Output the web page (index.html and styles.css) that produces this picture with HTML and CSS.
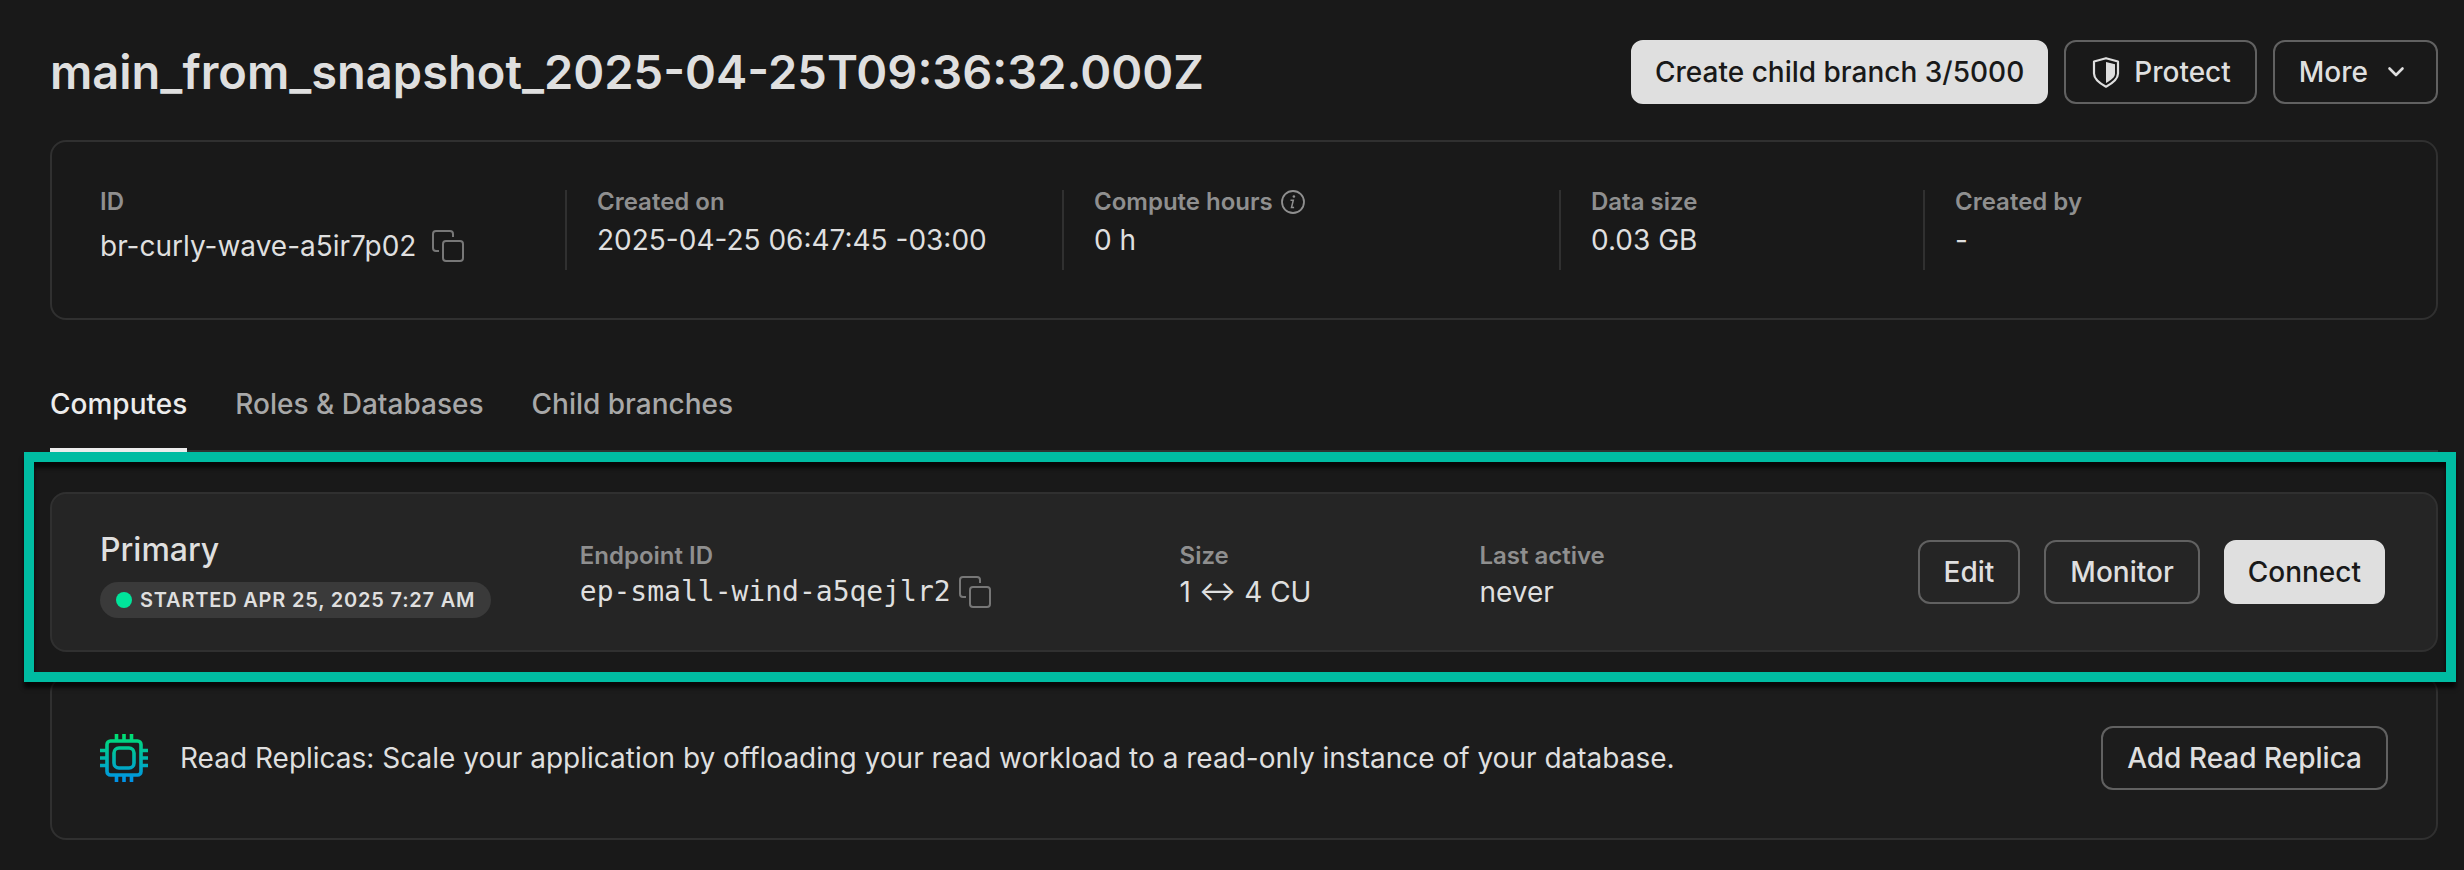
FILE: index.html
```html
<!DOCTYPE html>
<html lang="en">
<head>
<meta charset="utf-8">
<title>main_from_snapshot_2025-04-25T09:36:32.000Z</title>
<link rel="stylesheet" href="styles.css">
</head>
<body>
<main class="page">
  <header class="page-header">
    <h1 class="title">main_from_snapshot_2025-04-25T09:36:32.000Z</h1>
    <div class="actions">
      <button class="btn btn-primary" type="button">Create child branch 3/5000</button>
      <button class="btn" type="button">
        <svg class="icon" viewBox="0 0 32 32" aria-hidden="true"><path d="M16 2.200 28 5.500v12c0 6-5.500 9.700-12 13.200C9.500 27.200 4 23.500 4 17.500v-12z" fill="none" stroke="currentColor" stroke-width="2.200" stroke-linejoin="round"/><path d="M16 6 25 8.200v9.300c0 3.800-4 6.500-9 9.500z" fill="currentColor"/></svg>
        Protect
      </button>
      <button class="btn" type="button">
        More
        <svg class="icon" viewBox="0 0 32 32" aria-hidden="true"><path d="m9.500 12.500 6.500 6.500 6.500-6.500" fill="none" stroke="currentColor" stroke-width="2.600" stroke-linecap="round" stroke-linejoin="round"/></svg>
      </button>
    </div>
  </header>

  <dl class="card summary">
    <div class="fact">
      <dt class="label">ID</dt>
      <dd class="value value-copy">br-curly-wave-a5ir7p02
        <button class="copy" type="button" aria-label="Copy branch ID"><svg class="icon" viewBox="0 0 32 32" aria-hidden="true"><g fill="none" stroke="currentColor" stroke-width="2"><path d="M7 21H4a3 3 0 0 1-3-3V4a3 3 0 0 1 3-3h14a3 3 0 0 1 3 3v3"/><rect x="11" y="11" width="20" height="20" rx="3"/></g></svg></button>
      </dd>
    </div>
    <div class="fact">
      <dt class="label">Created on</dt>
      <dd class="value">2025-04-25 06:47:45 -03:00</dd>
    </div>
    <div class="fact">
      <dt class="label label-info">Compute hours
        <svg class="icon-info" viewBox="0 0 24 24" aria-hidden="true"><circle cx="12" cy="12" r="11" fill="none" stroke="currentColor" stroke-width="1.800"/><path d="M9.500 10.300h2.800l-1.800 7.200h2.600" fill="none" stroke="currentColor" stroke-width="1.500"/><circle cx="12.900" cy="6.500" r="1.300" fill="currentColor"/></svg>
      </dt>
      <dd class="value">0 h</dd>
    </div>
    <div class="fact">
      <dt class="label">Data size</dt>
      <dd class="value">0.03 GB</dd>
    </div>
    <div class="fact">
      <dt class="label">Created by</dt>
      <dd class="value">-</dd>
    </div>
  </dl>

  <nav class="tabs">
    <a class="tab tab-active" href="#computes">Computes</a>
    <a class="tab" href="#roles">Roles &amp; Databases</a>
    <a class="tab" href="#children">Child branches</a>
  </nav>

  <div class="highlight">
    <section class="card compute" id="computes">
      <div class="compute-name">
        <h2 class="name">Primary</h2>
        <span class="chip"><span class="dot"></span>STARTED APR 25, 2025 7:27 AM</span>
      </div>
      <div class="detail">
        <span class="label">Endpoint ID</span>
        <span class="value value-mono">ep-small-wind-a5qejlr2
          <button class="copy" type="button" aria-label="Copy endpoint ID"><svg class="icon" viewBox="0 0 32 32" aria-hidden="true"><g fill="none" stroke="currentColor" stroke-width="2"><path d="M7 21H4a3 3 0 0 1-3-3V4a3 3 0 0 1 3-3h14a3 3 0 0 1 3 3v3"/><rect x="11" y="11" width="20" height="20" rx="3"/></g></svg></button>
        </span>
      </div>
      <div class="detail">
        <span class="label">Size</span>
        <span class="value">1 ↔ 4 CU</span>
      </div>
      <div class="detail">
        <span class="label">Last active</span>
        <span class="value">never</span>
      </div>
      <div class="compute-actions">
        <button class="btn" type="button">Edit</button>
        <button class="btn" type="button">Monitor</button>
        <button class="btn btn-primary" type="button">Connect</button>
      </div>
    </section>
  </div>

  <section class="card replicas">
    <svg class="icon-chip" viewBox="0 0 48 48" aria-hidden="true">
      <defs><linearGradient id="chip-fill" gradientUnits="userSpaceOnUse" x1="0" y1="0" x2="0" y2="48"><stop offset="0" stop-color="#00e070"/><stop offset="1" stop-color="#0090e8"/></linearGradient></defs>
      <g fill="none" stroke="url(#chip-fill)" stroke-width="3.600"><rect x="7" y="7" width="34" height="34" rx="3.500"/><rect x="14" y="14" width="20" height="20" rx="5"/><path d="M16.500 0v6M24 0v6M31.500 0v6M16.500 42v6M24 42v6M31.500 42v6M0 16.500h6M0 24h6M0 31.500h6M42 16.500h6M42 24h6M42 31.500h6"/></g>
    </svg>
    <p class="replicas-text">Read Replicas: Scale your application by offloading your read workload to a read-only instance of your database.</p>
    <button class="btn" type="button">Add Read Replica</button>
  </section>
</main>
</body>
</html>
```
FILE: styles.css
```css
* {
  box-sizing: border-box;
}

body {
  margin: 0;
  background: #191919;
  color: #dfdfdf;
  font-family: Inter, "Liberation Sans", sans-serif;
  font-size: 28px;
  line-height: 36px;
}

.page {
  padding: 40px 26px 30px 50px;
}

.page-header {
  display: flex;
  align-items: center;
  justify-content: space-between;
}

.title {
  margin: 0;
  font-size: 47px;
  line-height: 64px;
  font-weight: 600;
}

.actions {
  display: flex;
  gap: 16px;
}

.btn {
  display: inline-flex;
  align-items: center;
  gap: 12px;
  height: 64px;
  padding: 0 24px;
  border: 2px solid #616161;
  border-radius: 12px;
  background: transparent;
  color: #dfdfdf;
  font: 500 28px/36px Inter, "Liberation Sans", sans-serif;
  white-space: nowrap;
}

.btn-primary {
  border-color: #dfdfdf;
  background: #dfdfdf;
  color: #191919;
  padding: 0 22px;
}

.icon {
  width: 32px;
  height: 32px;
}

.card {
  border: 2px solid #303030;
  border-radius: 16px;
}

.summary {
  display: grid;
  grid-template-columns: 465fr 497fr 497fr 364fr 465fr;
  margin: 36px 0 0;
  padding: 48px;
}

.fact {
  height: 80px;
}

.fact + .fact {
  padding-left: 30px;
  border-left: 2px solid #303030;
}

.label {
  display: block;
  color: #8f8f8f;
  font-size: 24px;
  line-height: 24px;
  font-weight: 600;
}

.label-info {
  display: flex;
  align-items: center;
  gap: 8px;
}

.icon-info {
  width: 24px;
  height: 24px;
}

.value {
  display: block;
  margin: 8px 0 0;
}

.value-copy {
  display: flex;
  align-items: center;
  gap: 16px;
  margin-top: 14px;
}

.copy {
  display: inline-flex;
  padding: 0;
  border: 0;
  background: none;
  color: #777;
}

.tabs {
  display: flex;
  gap: 48px;
  margin-top: 48px;
  border-bottom: 2px solid #303030;
}

.tab {
  margin-bottom: -2px;
  padding: 18px 0 26px;
  border-bottom: 4px solid transparent;
  color: #a8a8a8;
  font-weight: 500;
  text-decoration: none;
}

.tab-active {
  border-color: #ececec;
  color: #ececec;
}

.highlight {
  position: relative;
  margin: 0 -18px 0 -26px;
  padding: 30px 8px 20px 16px;
  border: 10px solid #00bca2;
  box-shadow: 0 6px 4px rgba(0, 0, 0, 0.7), inset 0 6px 4px rgba(0, 0, 0, 0.7);
}

.compute {
  display: grid;
  grid-template-columns: 480fr 600fr 300fr 300fr 606fr;
  align-items: center;
  padding: 32px 51px 32px 48px;
  background: #252525;
}

.name {
  margin: 0 0 8px;
  font-size: 32px;
  line-height: 48px;
  font-weight: 500;
}

.chip {
  display: flex;
  align-items: center;
  gap: 8px;
  width: fit-content;
  padding: 0 16px;
  border-radius: 18px;
  background: #3a3a3a;
  font-size: 20px;
  font-weight: 600;
  letter-spacing: 0.04em;
}

.dot {
  width: 16px;
  height: 16px;
  border-radius: 8px;
  background: #00e59b;
}

.detail {
  padding-top: 10px;
}

.detail .value {
  margin-top: 6px;
}

.detail .value-mono {
  display: flex;
  align-items: center;
  gap: 8px;
  font-family: "DejaVu Sans Mono", monospace;
}

.compute-actions {
  display: flex;
  justify-content: flex-end;
  gap: 24px;
}

.replicas {
  display: flex;
  align-items: center;
  margin-top: -6px;
  padding: 48px;
  background: #1c1c1c;
}

.icon-chip {
  width: 48px;
  height: 48px;
}

.replicas-text {
  flex: 1;
  margin: 0 32px;
}
```
